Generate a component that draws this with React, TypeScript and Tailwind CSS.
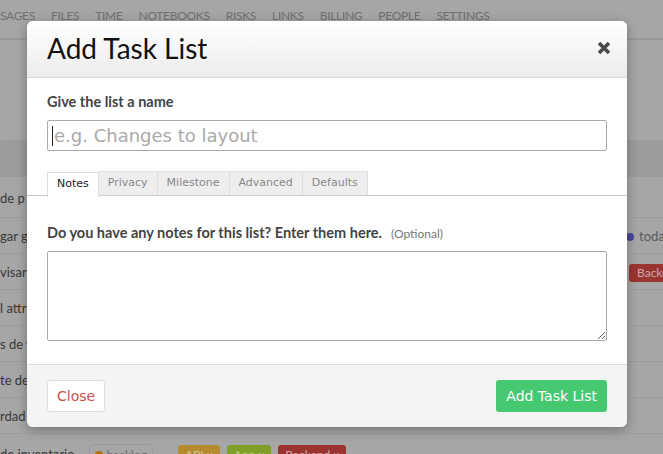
import React from 'react'

const navItems = ['SAGES', 'FILES', 'TIME', 'NOTEBOOKS', 'RISKS', 'LINKS', 'BILLING', 'PEOPLE', 'SETTINGS']
const rows = ['de p', 'gar gr', 'visar', 'l attri', 's de v', 'te de', 'rdad']
const tabs = ['Notes', 'Privacy', 'Milestone', 'Advanced', 'Defaults']

function Background() {
  return (
    <div className="absolute inset-0 bg-[#a6a6a6] font-['Lato',sans-serif] overflow-hidden">
      {/* top nav */}
      <div className="h-[40px] border-b-2 border-[#999] flex items-center gap-[16px] pb-[7px] text-[12px] tracking-[-0.3px] text-[#707070]">
        {navItems.map((n) => (
          <span key={n}>{n}</span>
        ))}
      </div>
      <div className="h-[100px]" />
      <div className="h-[37px] bg-[#9c9c9c]" />
      {rows.map((r, i) => (
        <div key={r} className={`${i === 0 ? 'h-[41px] pt-[4px]' : 'h-[36px] pt-[2px]'} border-b border-[#9d9d9d] flex items-center text-[13px] text-[#383838] relative`}>
          <span>{r}</span>
          {i === 1 && (
            <span className="absolute left-[626px] flex items-center gap-[5px] text-[#5a5a5a]">
              <span className="w-[8px] h-[8px] rounded-full bg-[#4b4796]" />
              today
            </span>
          )}
          {i === 2 && (
            <span className="absolute left-[629px] px-[8px] h-[18px] rounded-[3px] bg-[#9b3431] text-[#c9a9a8] text-[12px] leading-[18px]">Backend</span>
          )}
        </div>
      ))}
      <div className="h-[36px] flex items-center text-[13px] text-[#383838] pt-[6px]">
        <span>de inventario</span>
        <span className="ml-[14px] h-[22px] px-[5px] rounded-[3px] border border-[#9b9b9b] flex items-center gap-[4px] text-[#6d6d6d] text-[12px]">
          <span className="w-[8px] h-[8px] rounded-full bg-[#b06f0e]" />
          backlog
        </span>
        <span className="ml-[25px] h-[20px] px-[7px] rounded-[3px] bg-[#b58b2f] text-[#d6c49a] text-[12px] leading-[20px]">API x</span>
        <span className="ml-[7px] h-[20px] px-[7px] rounded-[3px] bg-[#7f9f26] text-[#bccb93] text-[12px] leading-[20px]">App x</span>
        <span className="ml-[7px] h-[20px] px-[7px] rounded-[3px] bg-[#9b3431] text-[#c9a9a8] text-[12px] leading-[20px]">Backend x</span>
      </div>
    </div>
  )
}

export default function App() {
  return (
    <div className="relative w-[663px] h-[454px] overflow-hidden">
      <Background />
      <div className="absolute left-[27px] top-[21px] w-[600px] h-[406px] bg-white rounded-[6px] shadow-[0_3px_12px_rgba(0,0,0,0.3)] flex flex-col overflow-hidden">
        {/* header */}
        <div className="h-[57px] bg-gradient-to-b from-white to-[#ececec] border-b border-[#d8d8d8] flex items-center justify-between pl-[20px] pr-[14px] pb-[2px] shrink-0">
          <h2 className="font-['Lato',sans-serif] text-[28px] text-[#111] leading-none">Add Task List</h2>
          <svg width="16" height="16" viewBox="0 0 16 16" className="mr-[1px]">
            <path d="M3 3 L13 13 M13 3 L3 13" stroke="#4a4a4a" strokeWidth="3.6" strokeLinecap="butt" />
          </svg>
        </div>
        {/* body */}
        <div className="flex-1 pt-[15px]">
          <div className="px-[20px]">
            <label className="block font-['Lato',sans-serif] font-bold text-[14.5px] text-[#444] leading-[18px]">Give the list a name</label>
            <div className="mt-[9px] h-[31px] border border-[#aaa] rounded-[2px] flex items-center pl-[4px] font-['DejaVu_Sans',sans-serif] text-[18px] text-[#aaa]">
              <span className="w-[1px] h-[20px] bg-[#222] mr-[1px]" />
              e.g. Changes to layout
            </div>
          </div>
          <div className="mt-[20px] border-b border-[#ccc] pl-[20px] flex h-[25px] font-['DejaVu_Sans',sans-serif] text-[11px]">
            {tabs.map((t, i) => (
              <div
                key={t}
                className={`px-[9px] flex items-center border border-b-0 -mr-[1px] ${i === 0 ? 'bg-white text-[#222] border-[#ddd] h-[25px] relative top-[1px] pb-[1px]' : 'bg-[#eee] text-[#888] border-[#ddd] h-[24px] self-end'}`}
              >
                {t}
              </div>
            ))}
          </div>
          <div className="px-[20px] pt-[26px]">
            <div className="flex items-baseline font-['Lato',sans-serif]">
              <span className="font-bold text-[14.5px] text-[#444]">Do you have any notes for this list? Enter them here.</span>
              <span className="ml-[9px] text-[12px] text-[#777]">(Optional)</span>
            </div>
            <textarea className="mt-[7px] block w-full h-[90px] border border-[#aaa] rounded-[2px] resize-y outline-none" />
          </div>
        </div>
        {/* footer */}
        <div className="h-[63px] bg-[#f4f4f4] border-t border-[#dadada] flex items-center justify-between px-[20px] shrink-0 font-['DejaVu_Sans',sans-serif] text-[14px]">
          <button className="h-[32px] px-[9px] bg-white border border-[#ddd] rounded-[3px] text-[#c9504e]">Close</button>
          <button className="h-[32px] px-[10px] bg-[#45c870] rounded-[3px] text-white">Add Task List</button>
        </div>
      </div>
    </div>
  )
}
